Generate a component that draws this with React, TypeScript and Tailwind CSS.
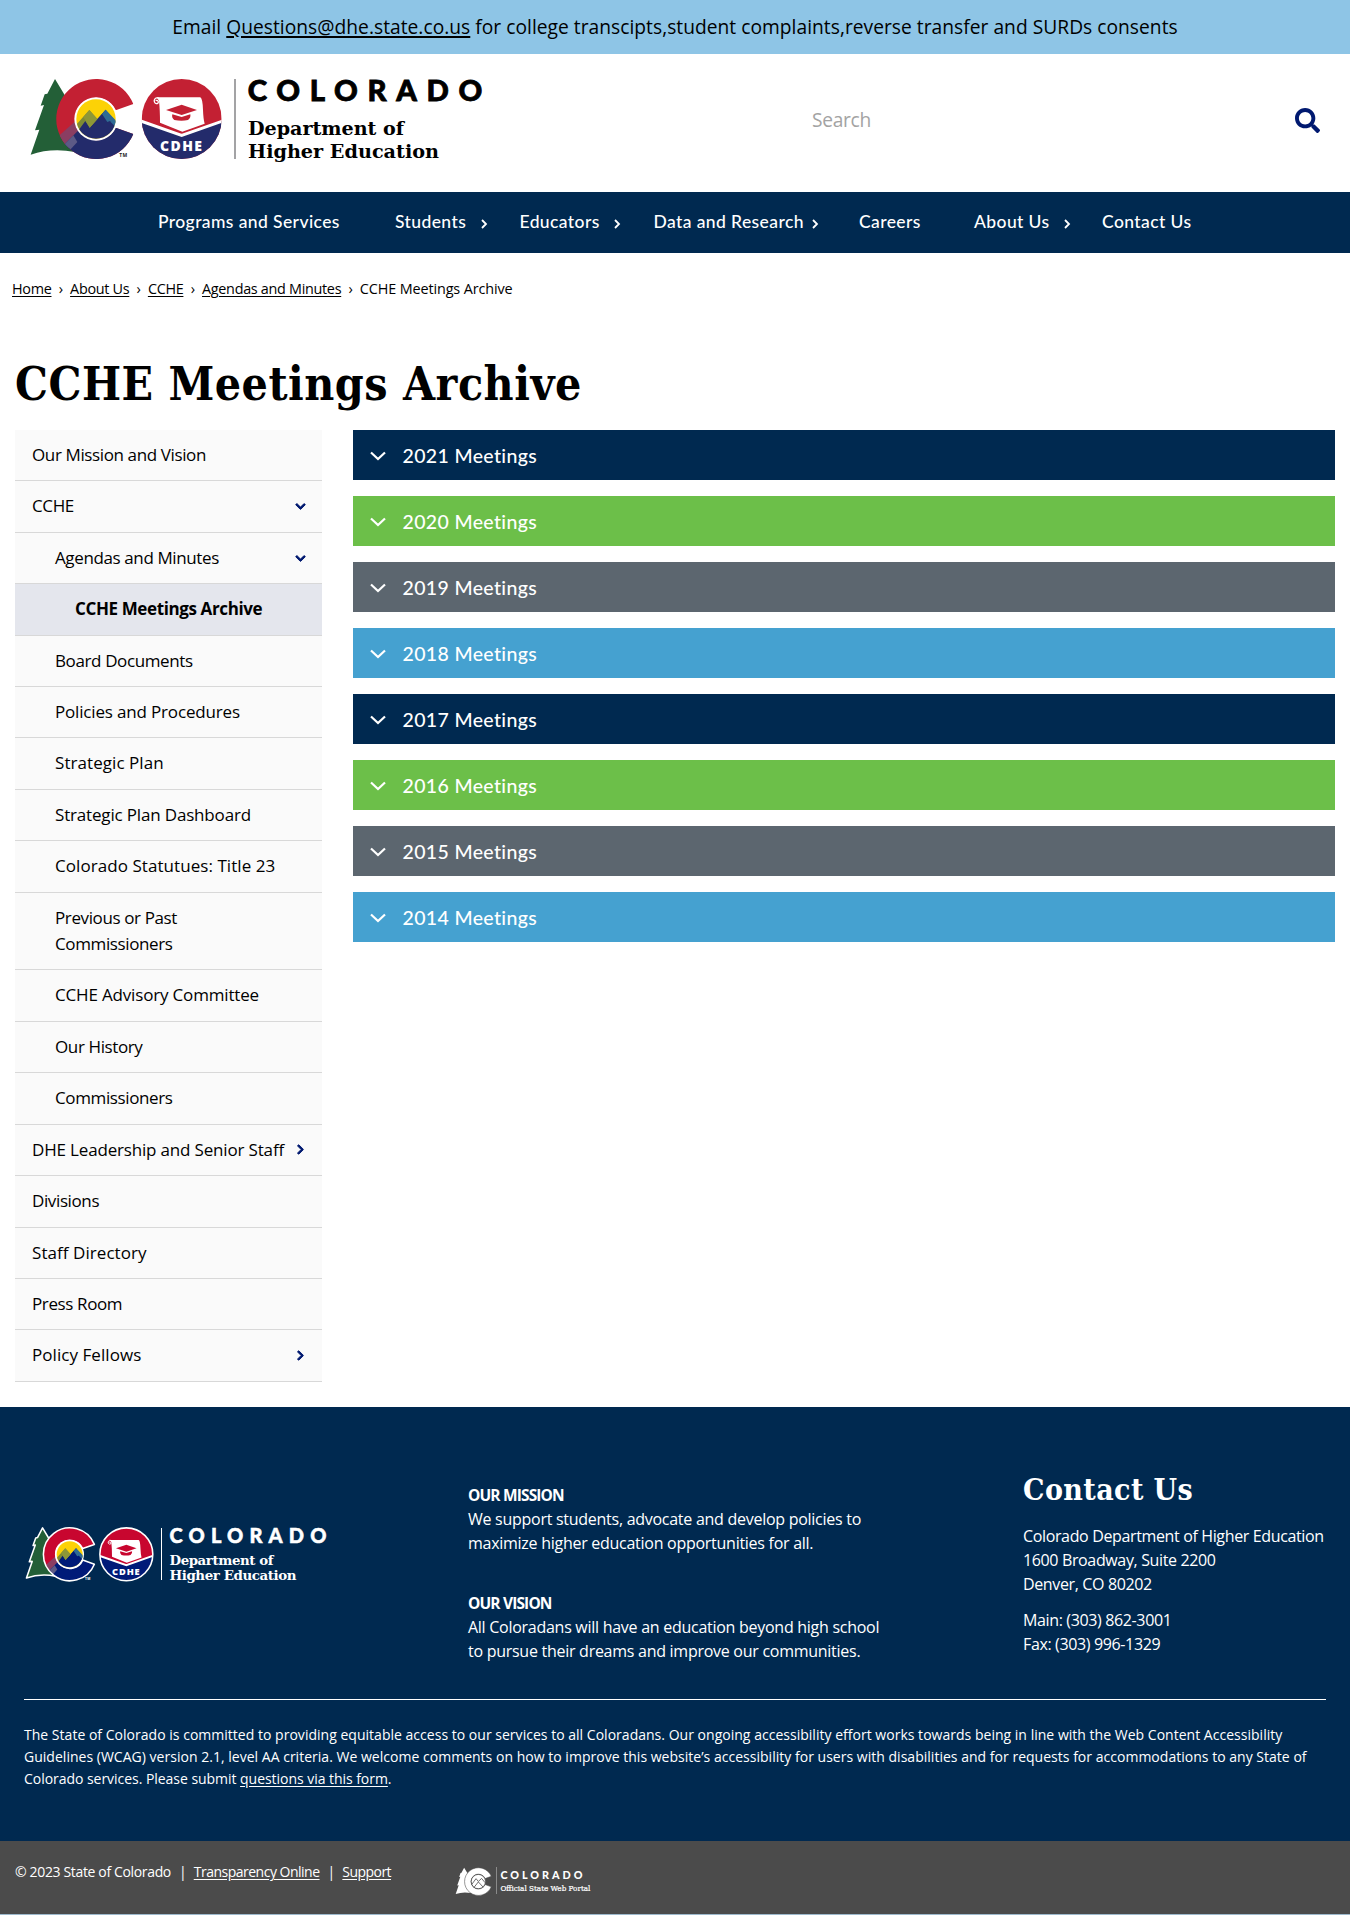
import React from "react";
import { FaSearch, FaChevronDown, FaChevronRight } from "react-icons/fa";

const SLAB = "font-['DejaVu_Serif_Condensed','DejaVu_Serif',serif]";

const navItems = [
  { label: "Programs and Services", box: "w-[237px]" },
  { label: "Students", box: "w-[124.5px]", gap: "ml-[15px]" },
  { label: "Educators", box: "w-[134px]", gap: "ml-[14px]" },
  { label: "Data and Research", box: "w-[205.5px]", gap: "ml-[8px]" },
  { label: "Careers", box: "w-[115px]" },
  { label: "About Us", box: "w-[128px]", gap: "ml-[14px]" },
  { label: "Contact Us", box: "w-[110px]" },
];

const crumbs = ["Home", "About Us", "CCHE", "Agendas and Minutes"];

type SideItem = { label: string; level: 0 | 1 | 2; icon?: "down" | "right"; active?: boolean; track?: string };
const tight = "tracking-[-0.38px]";
const medium = "tracking-[-0.17px]";
const wide = "tracking-[0.06px]";
const sideItems: SideItem[] = [
  { label: "Our Mission and Vision", level: 0 },
  { label: "CCHE", level: 0, icon: "down" },
  { label: "Agendas and Minutes", level: 1, icon: "down" },
  { label: "CCHE Meetings Archive", level: 2, active: true },
  { label: "Board Documents", level: 1 },
  { label: "Policies and Procedures", level: 1, track: medium },
  { label: "Strategic Plan", level: 1, track: wide },
  { label: "Strategic Plan Dashboard", level: 1, track: medium },
  { label: "Colorado Statutues: Title 23", level: 1, track: wide },
  { label: "Previous or Past\nCommissioners", level: 1 },
  { label: "CCHE Advisory Committee", level: 1, track: medium },
  { label: "Our History", level: 1 },
  { label: "Commissioners", level: 1 },
  { label: "DHE Leadership and Senior Staff", level: 0, icon: "right", track: medium },
  { label: "Divisions", level: 0 },
  { label: "Staff Directory", level: 0, track: wide },
  { label: "Press Room", level: 0 },
  { label: "Policy Fellows", level: 0, icon: "right", track: wide },
];
const indent = ["pl-[17px]", "pl-[40px]", "pl-[60px]"];

const years = [
  { year: 2021, bg: "bg-[#002950]" },
  { year: 2020, bg: "bg-[#6cbf49]" },
  { year: 2019, bg: "bg-[#5c666f]" },
  { year: 2018, bg: "bg-[#45a1d0]" },
  { year: 2017, bg: "bg-[#002950]" },
  { year: 2016, bg: "bg-[#6cbf49]" },
  { year: 2015, bg: "bg-[#5c666f]" },
  { year: 2014, bg: "bg-[#45a1d0]" },
];

const TREE = "M105 57 L138 112 L165 180 L165 276 Q95 262 32 284 L58 209 L45 211 L72 135 L62 137 L74 103 L82 101 Z";
const C_SHAPE = "M340 132 A120 120 0 1 0 340 222 L287 203 A64 64 0 1 1 287 151 Z";

/* Tree, letter C and department seal. */
function Emblem({ id, outlined = false }: { id: string; outlined?: boolean }) {
  const red = outlined ? "#c8062f" : "#c32033";
  const blue = outlined ? "#001a78" : "#232b6b";
  const line = outlined ? { stroke: "#fff", strokeWidth: 7, strokeLinejoin: "round" as const } : {};
  return (
    <g>
      <clipPath id={id + "c"}><path d={C_SHAPE} /></clipPath>
      <clipPath id={id + "h"}><circle cx="228" cy="177" r="59" /></clipPath>
      <clipPath id={id + "s"}><circle cx="485" cy="177" r="120" /></clipPath>
      <path d={TREE} fill="#235f37" {...line} />
      <g clipPath={`url(#${id}c)`}>
        <rect x="100" y="50" width="250" height="250" fill={red} />
        <path d="M112 232 L170 180 L190 215 L142 262 Z" fill="#8a3e62" />
        <path d="M132 254 L180 206 L228 190 L350 190 L350 300 L160 300 Z" fill={blue} />
        <path d="M132 254 L160 226 L172 246 L152 268 Z" fill="#5d5a86" />
      </g>
      <path d={C_SHAPE} fill="none" {...line} />
      <circle cx="228" cy="177" r="65" fill="#fff" />
      <g clipPath={`url(#${id}h)`}>
        <rect x="165" y="110" width="130" height="130" fill="#fcd206" />
        <path d="M160 204 L208 150 L232 177 L209 203 L196 212 L160 230 Z" fill="#7f8b33" />
        <path d="M232 177 L257 149 L300 195 L300 215 L250 215 Z" fill="#2f6b94" />
        <path d="M160 232 L196 183 L209 203 L257 149 L272 186 L292 206 L292 240 L160 240 Z" fill={blue} />
        <path d="M208 150 L232 177 L209 203 L190 171 Z" fill="#8e9737" />
        <path d="M257 149 L292 188 L292 204 L272 182 L262 186 L246 162 Z" fill="#2f6b94" />
      </g>
      <g clipPath={`url(#${id}s)`}>
        <rect x="365" y="57" width="240" height="240" fill={red} />
        <path d="M365 184 L485 226 L605 184 L605 300 L365 300 Z" fill={blue} />
        <path d="M362 183 L485 226 L608 183" fill="none" stroke="#fff" strokeWidth="9" />
      </g>
      <circle cx="485" cy="177" r="120" fill="none" {...line} />
      <path d="M410 112 L541 112 Q548 116 549 150 Q550 178 554 191 L487 215 L420 188 Q420 150 417 122 Z" fill="#fff" />
      <path d="M418 116 A9 9 0 1 0 409 131 A5 5 0 1 0 407 122" fill="none" stroke="#fff" strokeWidth="4" />
      <path d="M438 150 L485 134 L531 150 L485 165 Z" fill={red} />
      <path d="M457 163 L485 171 L511 163 Q513 174 504 180 Q485 185 463 180 Q454 174 457 163 Z" fill={red} />
      <text x="485" y="272" textAnchor="middle" fill="#fff" fontSize="42" fontWeight="800" letterSpacing="4" fontFamily="Open Sans, sans-serif">CDHE</text>
      <text x="298" y="292" fill={outlined ? "#fff" : "#222"} fontSize="15" fontWeight="700" fontFamily="Open Sans, sans-serif" textLength="24">TM</text>
    </g>
  );
}

const slabSvg = "DejaVu Serif Condensed, DejaVu Serif, serif";

function HeaderLogo() {
  return (
    <svg width="480" height="120" viewBox="0 0 1440 360" aria-label="Colorado Department of Higher Education">
      <Emblem id="hd" />
      <rect x="643" y="57" width="4" height="240" fill="#77777a" />
      <text x="683" y="124" fontSize="88" fontWeight="900" fontFamily="Lato, sans-serif" textLength="704" stroke="#000" strokeWidth="2.5">COLORADO</text>
      <text x="684" y="224" fontSize="58" fontWeight="700" fontFamily={slabSvg} textLength="468" lengthAdjust="spacingAndGlyphs">Department of</text>
      <text x="684" y="295" fontSize="58" fontWeight="700" fontFamily={slabSvg} textLength="573" lengthAdjust="spacingAndGlyphs">Higher Education</text>
    </svg>
  );
}

function FooterLogo() {
  return (
    <svg width="320" height="72" viewBox="0 0 320 72" aria-label="Colorado Department of Higher Education" fill="#fff">
      <g transform="translate(-0.6 -4.7) scale(0.2205)"><Emblem id="ft" outlined /></g>
      <rect x="141" y="8" width="1" height="52" />
      <text x="149.5" y="23" fontSize="20" fontWeight="900" fontFamily="Lato, sans-serif" textLength="156.5" stroke="#fff" strokeWidth="0.5">COLORADO</text>
      <text x="149.5" y="45" fontSize="13" fontWeight="700" fontFamily={slabSvg} textLength="103.5" lengthAdjust="spacingAndGlyphs">Department of</text>
      <text x="149.5" y="60.3" fontSize="13" fontWeight="700" fontFamily={slabSvg} textLength="126.5" lengthAdjust="spacingAndGlyphs">Higher Education</text>
    </svg>
  );
}

function PortalLogo() {
  return (
    <svg width="200" height="44" viewBox="0 0 200 44" aria-label="Colorado Official State Web Portal" fill="#fff">
      <g transform="translate(0 -0.9) scale(0.1156)">
        <path d={TREE} />
        <path d={C_SHAPE} stroke="#4b4b4b" strokeWidth="5" />
        <circle cx="228" cy="177" r="62" stroke="#4b4b4b" strokeWidth="7" />
        <path d="M172 200 L208 152 L228 176 L256 150 L286 186 M190 228 L228 180 L270 226" fill="none" stroke="#4b4b4b" strokeWidth="7" />
      </g>
      <rect x="44" y="5" width="1" height="27" fill="#8a8a8a" />
      <text x="48.4" y="17" fontSize="10.8" fontWeight="900" fontFamily="Lato, sans-serif" textLength="82">COLORADO</text>
      <text x="48.4" y="29" fontSize="8" fontWeight="400" stroke="#fff" strokeWidth="0.2" fontFamily={slabSvg} textLength="90" lengthAdjust="spacingAndGlyphs">Official State Web Portal</text>
    </svg>
  );
}

export default function App() {
  return (
    <div className="flex h-[1915px] w-[1350px] flex-col bg-white font-['Open_Sans',sans-serif] text-black">
      <div className="flex h-[54px] items-center justify-center bg-[#8ec5e6] text-[19.2px] whitespace-pre tracking-[0.03px]">
        Email <a className="underline decoration-[1.5px] underline-offset-2">Questions@dhe.state.co.us</a> for college transcipts,student complaints,reverse transfer and SURDs consents
      </div>

      <header className="flex h-[138px] justify-between pt-[6px] pl-5">
        <HeaderLogo />
        <div className="flex h-[120px] w-[538px] items-center justify-between pr-[30px]">
          <span className="text-[19.2px] tracking-[-0.3px] text-[#a3a3a3]">Search</span>
          <FaSearch className="size-[25px] text-[#001970]" />
        </div>
      </header>

      <nav className="flex h-[61px] items-center bg-[#002950] pl-[158px] font-['Lato',sans-serif] text-[17.5px] font-medium tracking-[0.4px] text-white">
        {navItems.map((n) => (
          <div key={n.label} className={"flex shrink-0 items-center whitespace-nowrap " + n.box}>
            {n.label}
            {n.gap && (
              <svg className={"mt-[3px] h-2.5 w-[7px] " + n.gap} viewBox="0 0 7 10" fill="none" stroke="currentColor" strokeWidth="1.8">
                <path d="M1 1 L5 5 L1 9" />
              </svg>
            )}
          </div>
        ))}
      </nav>

      <div className="mt-[25px] flex h-[22px] items-center pl-3 text-[14.4px] tracking-[-0.3px] whitespace-nowrap">
        {crumbs.map((c) => (
          <React.Fragment key={c}>
            <a className="underline underline-offset-2">{c}</a>
            <span className="w-[18.6px] text-center">›</span>
          </React.Fragment>
        ))}
        <span className="tracking-[-0.12px]">CCHE Meetings Archive</span>
      </div>

      <h1 className={"mt-[50px] h-[80px] pl-[15px] text-[46px] leading-[69px] font-bold tracking-[0.5px] " + SLAB}>
        CCHE Meetings Archive
      </h1>

      <main className="flex h-[977px] items-start justify-between pr-[15px] pl-[15px]">
        <ul className="w-[307px] text-[17px] leading-[26.4px]">
          {sideItems.map((s) => (
            <li
              key={s.label}
              className={
                "flex items-center justify-between border-b border-[#d8d8d8] py-3 pr-4 " +
                indent[s.level] +
                (s.active ? " bg-[#e4e6ed] font-bold" : " bg-[#fafafa]")
              }
            >
              <span className={"whitespace-pre " + (s.track ?? tight)}>{s.label}</span>
              {s.icon === "down" && <FaChevronDown className="size-[11px] shrink-0 text-[#001970]" stroke="currentColor" strokeWidth="45" />}
              {s.icon === "right" && <FaChevronRight className="size-[11px] shrink-0 text-[#001970]" stroke="currentColor" strokeWidth="45" />}
            </li>
          ))}
        </ul>
        <div className="flex w-[982.5px] flex-col gap-4">
          {years.map((y) => (
            <div key={y.year} className={"flex h-[50px] items-center pt-px pl-[17px] text-white " + y.bg}>
              <svg className="h-[10px] w-4" viewBox="0 0 16 10" fill="none" stroke="currentColor" strokeWidth="2.2">
                <path d="M1 1.5 L8 8 L15 1.5" />
              </svg>
              <span className="ml-[17px] pt-px font-['Lato',sans-serif] text-[19.5px] font-medium tracking-[0.35px]">{y.year} Meetings</span>
            </div>
          ))}
        </div>
      </main>

      <footer className="flex h-[434px] flex-col bg-[#002950] px-6 text-white">
        <div className="flex h-[292px] text-base leading-6 tracking-[-0.36px]">
          <div className="-ml-1 w-[448px] pt-[113px]">
            <FooterLogo />
          </div>
          <div className="w-[555px] pt-[76px] tracking-[-0.27px] whitespace-pre">
            <p className="text-[15.5px] font-bold tracking-[-0.85px]">OUR MISSION</p>
            <p>{"We support students, advocate and develop policies to\nmaximize higher education opportunities for all."}</p>
            <p className="mt-9 text-[15.5px] font-bold tracking-[-0.85px]">OUR VISION</p>
            <p>{"All Coloradans will have an education beyond high school\nto pursue their dreams and improve our communities."}</p>
          </div>
          <div className="pt-[62px] whitespace-pre">
            <h2 className={"h-[55px] text-[30px] leading-[42px] font-bold tracking-[0.4px] " + SLAB}>Contact Us</h2>
            <p>{"Colorado Department of Higher Education\n1600 Broadway, Suite 2200\nDenver, CO 80202"}</p>
            <p className="mt-3">{"Main: (303) 862-3001\nFax: (303) 996-1329"}</p>
          </div>
        </div>
        <hr className="border-white" />
        <p className="mt-[24px] text-sm leading-[22.1px] tracking-[0.02px] whitespace-pre">
          The State of Colorado is committed to providing equitable access to our services to all Coloradans. Our ongoing accessibility effort works towards being in line with the Web Content Accessibility{"\n"}
          Guidelines (WCAG) version 2.1, level AA criteria. We welcome comments on how to improve this website’s accessibility for users with disabilities and for requests for accommodations to any State of{"\n"}
          <span className="tracking-[-0.04px]">Colorado services. Please submit <a className="underline underline-offset-2">questions via this form</a>.</span>
        </p>
      </footer>

      <div className="flex h-[74px] items-start border-b border-[#9db9cc] bg-[#4b4b4b] pl-[15px] text-white">
        <p className="mt-5 w-[437px] text-[14px] tracking-[-0.42px] whitespace-pre">
          <span className="tracking-[-0.35px]">© 2023 State of Colorado</span><span className="ml-[8px] mr-[7.5px]">|</span>
          <a className="tracking-[-0.5px] underline underline-offset-2">Transparency Online</a>
          <span className="ml-[8px] mr-[7.5px]">|</span>
          <a className="tracking-[-0.55px] underline underline-offset-2">Support</a>
        </p>
        <div className="mt-[21px]">
          <PortalLogo />
        </div>
      </div>
    </div>
  );
}
